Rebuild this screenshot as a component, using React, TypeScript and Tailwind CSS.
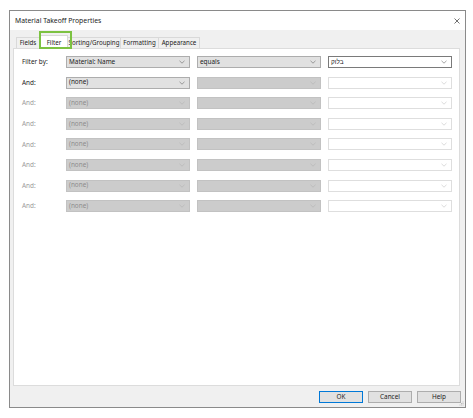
import React from "react";

const Chevron = ({ color }: { color: string }) => (
  <svg width="6" height="4" viewBox="0 0 6 4" className="shrink-0">
    <path d="M0.5 0.8 L3 3.2 L5.5 0.8" fill="none" stroke={color} strokeWidth="0.6" />
  </svg>
);

type Kind = "enabled" | "disabled" | "white" | "whiteDim";

const Combo = ({ kind, text, w }: { kind: Kind; text?: string; w: string }) => {
  const cls =
    kind === "enabled"
      ? "bg-[#e1e1e1] border-[#adadad] text-[#222]"
      : kind === "disabled"
      ? "bg-[#cccccc] border-[#c2c2c2] text-[#8d8d8d]"
      : kind === "white"
      ? "bg-white border-[#7a7a7a] text-[#222]"
      : "bg-white border-[#dedede] text-[#222]";
  const chev =
    kind === "enabled" || kind === "white" ? "#6a6a6a" : kind === "disabled" ? "#b3b3b3" : "#c4c4c4";
  return (
    <div className={`${w} h-[12px] border ${cls} flex items-center justify-between pl-[2px] pr-[4px]`}>
      <span className="leading-none">{text}</span>
      <Chevron color={chev} />
    </div>
  );
};

export default function App() {
  const rows = [0, 1, 2, 3, 4, 5];
  return (
    <div
      className="w-[473px] h-[418px] bg-white relative overflow-hidden text-[6.4px]"
      style={{ fontFamily: '"Noto Sans", "Liberation Sans", sans-serif' }}
    >
      <div className="absolute left-[9px] top-[10px] w-[457px] h-[398px] border border-[#8a8a8a] bg-[#f0f0f0] flex flex-col">
        {/* title bar */}
        <div className="h-[19px] bg-white flex items-center justify-between pl-[5px] pr-[5px] shrink-0 pt-[1px]">
          <span className="text-[6.8px] text-[#222]">Material Takeoff Properties</span>
          <svg width="6" height="6" viewBox="0 0 6 6">
            <path d="M0.5 0.5 L5.5 5.5 M5.5 0.5 L0.5 5.5" stroke="#333" strokeWidth="0.7" />
          </svg>
        </div>
        {/* tabs */}
        <div className="flex items-end pl-[6px] h-[18px] shrink-0 relative text-[6.2px] text-[#222]">
          <div className="w-[24px] h-[11px] border border-b-0 border-[#d9d9d9] bg-[#f0f0f0] flex items-center justify-center">Fields</div>
          <div className="w-[28px] h-[14px] border border-b-0 border-[#d9d9d9] bg-white flex items-start justify-center pt-[2px] -mb-[1px] z-10">Filter</div>
          <div className="w-[53px] h-[11px] border border-b-0 border-l-0 border-[#d9d9d9] bg-[#f0f0f0] flex items-center justify-center">Sorting/Grouping</div>
          <div className="w-[38px] h-[11px] border border-b-0 border-l-0 border-[#d9d9d9] bg-[#f0f0f0] flex items-center justify-center">Formatting</div>
          <div className="w-[41px] h-[11px] border border-b-0 border-l-0 border-[#d9d9d9] bg-[#f0f0f0] flex items-center justify-center">Appearance</div>
          <div className="absolute left-[29px] top-[1px] w-[33px] h-[18px] border-2 border-[#7cc242] z-20" />
        </div>
        {/* panel */}
        <div className="ml-[3px] mr-[5px] h-[338px] bg-white border border-[#dcdcdc] pt-[7px] pl-[8px] flex flex-col gap-[8.6px]">
          <div className="flex items-center">
            <div className="w-[44px] text-[#222]">Filter by:</div>
            <Combo kind="enabled" text="Material: Name" w="w-[124px]" />
            <div className="w-[7px]" />
            <Combo kind="enabled" text="equals" w="w-[124px]" />
            <div className="w-[7px]" />
            <Combo kind="white" text="בלוק" w="w-[124px]" />
          </div>
          <div className="flex items-center">
            <div className="w-[44px] text-[#222]">And:</div>
            <Combo kind="enabled" text="(none)" w="w-[124px]" />
            <div className="w-[7px]" />
            <Combo kind="disabled" w="w-[124px]" />
            <div className="w-[7px]" />
            <Combo kind="whiteDim" w="w-[124px]" />
          </div>
          {rows.map((r) => (
            <div key={r} className="flex items-center">
              <div className="w-[44px] text-[#9a9a9a]">And:</div>
              <Combo kind="disabled" text="(none)" w="w-[124px]" />
              <div className="w-[7px]" />
              <Combo kind="disabled" w="w-[124px]" />
              <div className="w-[7px]" />
              <Combo kind="whiteDim" w="w-[124px]" />
            </div>
          ))}
        </div>
        {/* footer */}
        <div className="flex justify-end gap-[5px] pr-[4px] pt-[5px] relative flex-1 text-[#222]">
          <div className="w-[44px] h-[12px] border border-[#0078d7] bg-[#e1e1e1] flex items-center justify-center">OK</div>
          <div className="w-[44px] h-[12px] border border-[#adadad] bg-[#e1e1e1] flex items-center justify-center">Cancel</div>
          <div className="w-[44px] h-[12px] border border-[#adadad] bg-[#e1e1e1] flex items-center justify-center">Help</div>
          <svg className="absolute right-[1px] bottom-[1px]" width="5" height="5" viewBox="0 0 5 5">
            <rect x="3.5" y="0.5" width="1" height="1" fill="#bbb" />
            <rect x="2" y="2" width="1" height="1" fill="#bbb" />
            <rect x="3.5" y="2" width="1" height="1" fill="#bbb" />
            <rect x="0.5" y="3.5" width="1" height="1" fill="#bbb" />
            <rect x="2" y="3.5" width="1" height="1" fill="#bbb" />
            <rect x="3.5" y="3.5" width="1" height="1" fill="#bbb" />
          </svg>
        </div>
      </div>
    </div>
  );
}
